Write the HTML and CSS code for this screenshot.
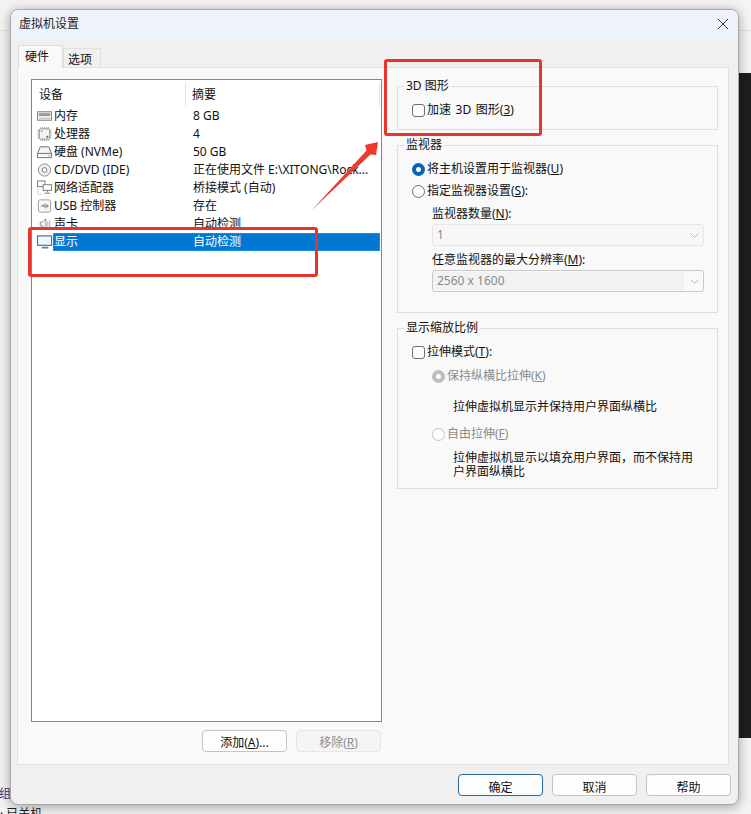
FILE: index.html
```html
<!DOCTYPE html>
<html lang="zh-CN">
<head>
<meta charset="utf-8">
<title>虚拟机设置</title>
<link rel="stylesheet" href="styles.css">
</head>
<body>
<div class="desk-line"></div>
<div class="desk-dark"></div>
<div class="desk-group">组</div>
<div class="desk-state">· 已关机</div>

<main class="window">
  <header class="titlebar">
    <span>虚拟机设置</span>
    <svg class="close" width="12" height="12" viewBox="0 0 12 12"><path d="M1 1l10 10M11 1L1 11" stroke="#333" stroke-width="1" fill="none"/></svg>
  </header>
  <nav class="tabs">
    <span class="tab tab-on">硬件</span>
    <span class="tab">选项</span>
  </nav>
  <section class="panel">
    <div class="left">
      <div class="list">
        <div class="list-head"><span class="head-a">设备</span><span class="head-b">摘要</span></div>
        <div class="row">
          <svg class="ico" viewBox="0 0 17 16"><rect x="0.500" y="3.500" width="15" height="9" fill="#f0f0f0" stroke="#7d7d7d"/><rect x="2" y="5" width="12" height="3" fill="#9a9a9a"/><path d="M2 10.500h12" stroke="#bbb"/></svg>
          <div class="cells"><span class="name">内存</span><span>8 GB</span></div>
        </div>
        <div class="row">
          <svg class="ico" viewBox="0 0 17 16"><rect x="2.500" y="2.500" width="11" height="11" rx="1" fill="#f4f4f4" stroke="#8a8a8a"/><path d="M4 0.500v2M6 0.500v2M8 0.500v2M10 0.500v2M12 0.500v2M4 13.500v2M6 13.500v2M8 13.500v2M10 13.500v2M12 13.500v2M0.500 4h2M0.500 6h2M0.500 8h2M0.500 10h2M0.500 12h2M13.500 4h2M13.500 6h2M13.500 8h2M13.500 10h2M13.500 12h2" stroke="#aaa"/><rect x="10" y="10" width="2" height="2" fill="#666"/><rect x="4" y="4" width="2" height="2" fill="#aaa"/></svg>
          <div class="cells"><span class="name">处理器</span><span>4</span></div>
        </div>
        <div class="row">
          <svg class="ico" viewBox="0 0 17 16"><path d="M3.500 2.500h9l3 7v4.500h-15V9.500z" fill="#f7f7f7" stroke="#6a6a6a"/><path d="M1 9.500h14" stroke="#6a6a6a"/><path d="M12 12h2" stroke="#999"/></svg>
          <div class="cells"><span class="name">硬盘 (NVMe)</span><span>50 GB</span></div>
        </div>
        <div class="row">
          <svg class="ico" viewBox="0 0 17 16"><circle cx="8" cy="8" r="6.500" fill="#efefef" stroke="#8a8a8a"/><circle cx="8" cy="8" r="2.500" fill="#fff" stroke="#777"/></svg>
          <div class="cells"><span class="name">CD/DVD (IDE)</span><span>正在使用文件 E:\XITONG\Rock...</span></div>
        </div>
        <div class="row">
          <svg class="ico" viewBox="0 0 17 16"><rect x="0.500" y="0.500" width="8" height="6" fill="#fff" stroke="#777"/><rect x="6.500" y="4.500" width="9" height="6" fill="#fff" stroke="#777"/><path d="M11 10.500v2M8 13.500h6" stroke="#777"/><path d="M1 9v5.500h5" stroke="#aaa" stroke-dasharray="1 1" fill="none"/></svg>
          <div class="cells"><span class="name">网络适配器</span><span>桥接模式 (自动)</span></div>
        </div>
        <div class="row">
          <svg class="ico" viewBox="0 0 17 16"><rect x="1.500" y="1.500" width="13" height="13" rx="2" fill="#f8f8f8" stroke="#999"/><path d="M4 8h8M10 6.500l2 1.500-2 1.500M6 8l2-2h1.500M7 8l2 2h1" stroke="#777" fill="none"/></svg>
          <div class="cells"><span class="name">USB 控制器</span><span>存在</span></div>
        </div>
        <div class="row">
          <svg class="ico" viewBox="0 0 17 16"><path d="M3.500 6h2l4-3.500v11L5.500 10h-2z" fill="#f4f4f4" stroke="#888"/><path d="M11.500 5.500v5M13.500 4v8" stroke="#aaa"/></svg>
          <div class="cells"><span class="name">声卡</span><span>自动检测</span></div>
        </div>
        <div class="row">
          <svg class="ico" viewBox="0 0 17 16"><rect x="0.500" y="1.500" width="15" height="10" fill="#eef5fb" stroke="#3f6d94" stroke-width="1.200"/><path d="M5 14h7" stroke="#5a82a3" stroke-width="2"/></svg>
          <div class="cells cells-on"><span class="name">显示</span><span>自动检测</span></div>
        </div>
      </div>
      <div class="list-actions">
        <button class="btn" type="button">添加(<u>A</u>)...</button>
        <button class="btn btn-off" type="button">移除(<u>R</u>)</button>
      </div>
    </div>

    <div class="right">
      <fieldset class="group group-3d">
        <legend>3D 图形</legend>
        <div class="opt opt-wide"><i class="box"></i>加速 3D 图形(<u>3</u>)</div>
      </fieldset>

      <fieldset class="group group-mon">
        <legend>监视器</legend>
        <div class="opt"><i class="radio radio-on"></i>将主机设置用于监视器(<u>U</u>)</div>
        <div class="opt opt-next"><i class="radio"></i>指定监视器设置(<u>S</u>):</div>
        <div class="sub">
          <div class="field-label">监视器数量(<u>N</u>):</div>
          <div class="select select-flat"><span class="select-value">1</span><svg width="9" height="5" viewBox="0 0 9 5"><path d="M0.500 0.500l4 4 4-4" stroke="#b5b5b5" fill="none"/></svg></div>
          <div class="field-label field-second">任意监视器的最大分辨率(<u>M</u>):</div>
          <div class="select"><span class="select-value">2560 x 1600</span><svg width="9" height="5" viewBox="0 0 9 5"><path d="M0.500 0.500l4 4 4-4" stroke="#b5b5b5" fill="none"/></svg></div>
        </div>
      </fieldset>

      <fieldset class="group group-scale">
        <legend>显示缩放比例</legend>
        <div class="opt"><i class="box"></i>拉伸模式(<u>T</u>):</div>
        <div class="opt opt-sub opt-off"><i class="radio radio-dis"></i>保持纵横比拉伸(<u>K</u>)</div>
        <p class="desc desc-a">拉伸虚拟机显示并保持用户界面纵横比</p>
        <div class="opt opt-sub opt-off opt-free"><i class="radio radio-blank"></i>自由拉伸(<u>F</u>)</div>
        <p class="desc desc-b">拉伸虚拟机显示以填充用户界面，而不保持用户界面纵横比</p>
      </fieldset>
    </div>
  </section>
  <footer class="footer">
    <button class="btn btn-main" type="button">确定</button>
    <button class="btn" type="button">取消</button>
    <button class="btn" type="button">帮助</button>
  </footer>
</main>

<div class="mark mark-list"></div>
<div class="mark mark-3d"></div>
<svg class="arrow" width="80" height="80" viewBox="0 0 80 80"><path d="M7 75L61.500 15.500 60 10 73 7 71 20 65.500 19.500z" fill="#ee3a2e"/></svg>
</body>
</html>
```

FILE: styles.css
```css
* { box-sizing: border-box; }
html, body { margin: 0; height: 100%; }
body {
  position: relative;
  width: 751px;
  height: 814px;
  overflow: hidden;
  background: #f4f4f4;
  font: 12px/16px "Noto Sans", "Noto Sans CJK SC", sans-serif;
  color: #111;
}
u { text-underline-offset: 1px; }

.desk-line { position: absolute; left: 0; right: 0; top: 30px; height: 1px; background: #e2e2e2; }
.desk-dark { position: absolute; left: 735px; top: 73px; width: 16px; height: 665px; background: #1e1e1e; }
.desk-group { position: absolute; left: -1px; top: 786px; color: #3c2f80; font-size: 12px; }
.desk-state { position: absolute; left: 0; top: 806px; font-size: 12px; color: #222; }

.window {
  position: absolute;
  left: 10px;
  top: 9px;
  width: 729px;
  height: 796px;
  background: #f0f0f0;
  border-radius: 8px;
  border: 1px solid #a9a9a9;
  box-shadow: 0 2px 12px rgba(0, 0, 0, 0.35);
  overflow: hidden;
  display: flex;
  flex-direction: column;
}
.titlebar {
  height: 30px;
  flex: none;
  background: #eef3f9;
  display: flex;
  align-items: center;
  justify-content: space-between;
  padding: 0 9px 2px 8px;
  font-size: 12px;
  color: #222;
}
.tabs { display: flex; align-items: flex-end; height: 27px; padding-left: 7px; flex: none; }
.tab {
  width: 38px;
  height: 19px;
  padding-left: 4px;
  line-height: 22px;
  background: #f0f0f0;
  border: 1px solid #e0e0e0;
  border-bottom: 0;
}
.tab-on {
  width: 45px;
  height: 23px;
  padding-left: 6px;
  background: #f9f9f9;
  border-color: #dcdcdc;
  line-height: 22px;
  position: relative;
  z-index: 1;
  margin-bottom: -1px;
}
.panel {
  width: 712px;
  height: 698px;
  margin-left: 6px;
  background: #f9f9f9;
  border: 1px solid #e2e2e2;
  padding: 11px 10px 0 13px;
  display: flex;
  gap: 15px;
  flex: none;
}
.left { width: 351px; flex: none; }
.list {
  height: 643px;
  background: #fff;
  border: 1px solid #85858b;
  padding-top: 1px;
}
.list-head {
  display: flex;
  height: 26px;
  padding: 6px 0 0 7px;
}
.head-a { width: 147px; height: 25px; border-right: 1px solid #e5e5e5; margin-top: -5px; padding-top: 5px; }
.head-b { padding-left: 6px; flex: 1; border-right: 1px solid #e5e5e5; margin-top: -5px; padding-top: 5px; margin-right: 1px; }
.row { display: flex; height: 18px; align-items: center; padding-left: 5px; }
.ico { width: 16px; height: 16px; flex: none; }
.cells { flex: 1; height: 18px; display: flex; align-items: center; margin-right: 1px; white-space: nowrap; }
.cells-on { background: #0078d4; color: #fff; outline: 1px dotted #7a8a99; outline-offset: -1px; }
.name { width: 140px; flex: none; padding-left: 1px; }

.list-actions { display: flex; justify-content: flex-end; gap: 9px; margin: 8px 0 0; padding-right: 1px; }
.btn {
  width: 85px;
  height: 22px;
  padding: 3px 0 0;
  font: inherit;
  line-height: 16px;
  color: #111;
  background: #fdfdfd;
  border: 1px solid #c4c4c4;
  border-radius: 4px;
}
.btn-off { background: #f5f5f5; border-color: #e6e6e6; color: #8f8f8f; }
.btn-main { border-color: #2a6a9c; box-shadow: 0 0 0 1px #e2eff8; }
.footer .btn { padding-top: 5px; }

.right { width: 321px; flex: none; }
.group {
  margin: 0;
  padding: 0;
  border: 1px solid #dedede;
  min-width: 0;
}
.group legend { margin-left: -8px; padding: 0 2px; line-height: 16px; }
.group-3d { height: 52px; margin-top: -1px; padding: 7px 0 0 14px; }
.group-mon { height: 176px; margin-top: 7px; padding: 7px 13px 0 14px; }
.group-scale { height: 169px; margin-top: 7px; padding: 7px 13px 0 14px; }
.opt { display: flex; align-items: center; height: 18px; white-space: pre; }
.opt-wide { word-spacing: 1.500px; }
.opt-next { margin-top: 4px; }
.box, .radio { width: 13px; height: 13px; flex: none; margin-right: 2px; background: #fdfdfd; border: 1px solid #6f6f6f; }
.box { border-radius: 3px; }
.radio { border-radius: 50%; }
.radio-on { border: 4px solid #0067c0; background: #fff; }
.radio-dis { border: 4px solid #bdbdbd; background: #fff; }
.radio-blank { border-color: #c4c4c4; }
.sub { padding-left: 20px; }
.field-label { margin-top: 6px; height: 16px; }
.field-second { margin-top: 6px; }
.select {
  height: 22px;
  margin-top: 2px;
  border: 1px solid #c9c9c9;
  border-radius: 3px;
  background: #f9f9f9;
  color: #8a8a8a;
  display: flex;
  align-items: center;
  justify-content: space-between;
  padding: 0 4px 0 0;
}
.select-value { flex: 0 0 251px; height: 18px; padding-left: 4px; background: #f2f2f2; line-height: 18px; }
.select-flat { border-color: #e6e6e6; background: #f7f7f7; }
.select-flat .select-value { background: transparent; }
.opt-sub { margin-left: 20px; }
.group-scale .opt-sub { margin-top: 6px; }
.opt-off { color: #8a8a8a; }
.group-scale .opt-free { margin-top: 11px; }
.desc { margin: 0; padding-left: 41px; line-height: 14px; width: 285px; }
.desc-a { margin-top: 15px; }
.desc-b { margin-top: 8px; }
.footer {
  flex: 1;
  display: flex;
  justify-content: flex-end;
  gap: 9px;
  padding: 9px 7px 0 0;
}

.mark { position: absolute; border: 3px solid #e8352b; border-radius: 3px; }
.mark-list { left: 28px; top: 227px; width: 290px; height: 50px; }
.mark-3d { left: 384px; top: 59px; width: 158px; height: 77px; }
.arrow { position: absolute; left: 305px; top: 135px; }
```
